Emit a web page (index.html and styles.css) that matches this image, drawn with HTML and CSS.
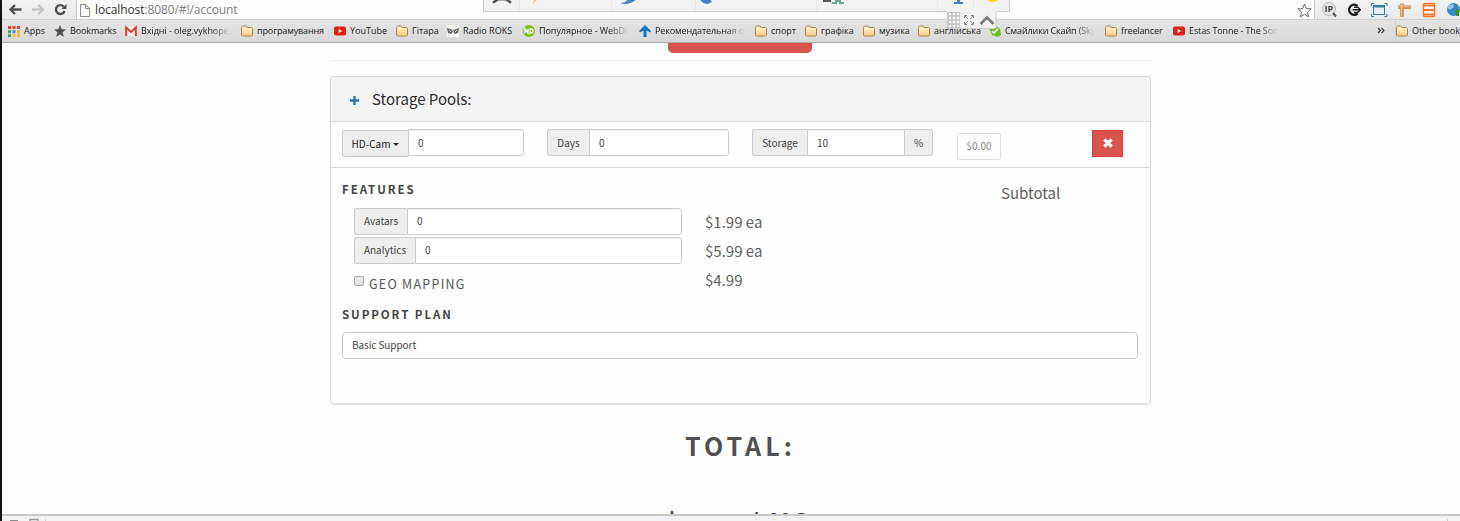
FILE: index.html
```html
<!DOCTYPE html>
<html lang="uk">
<head>
<meta charset="utf-8">
<title>Account</title>
<link rel="stylesheet" href="styles.css">
</head>
<body>
<svg width="0" height="0" class="defs">
  <defs>
    <linearGradient id="fold" x1="0" y1="0" x2="0" y2="1"><stop offset="0" stop-color="#fff0c4"/><stop offset="1" stop-color="#f7cf83"/></linearGradient>
    <symbol id="folder" viewBox="0 0 12 11"><path d="M.5 9.5V2L1.5.5h3.700l1 1.500h4.300l1 1v6.500l-1 1h-9z" fill="url(#fold)" stroke="#a98249"/><path d="M1.500 3.500h9" stroke="#fff7da"/></symbol>
    <symbol id="yt" viewBox="0 0 12 12"><rect y="1.500" width="12" height="9" rx="2" fill="#e1201b"/><path d="M4.700 4v4l3.500-2z" fill="#fff"/></symbol>
  </defs>
</svg>
<div class="window">
  <header class="chrome">
    <div class="nav">
      <svg class="navbtns" viewBox="0 0 74 19" fill="none">
        <path d="M8.500 9.500h11M13 5 8.500 9.500 13 14" stroke="#505050" stroke-width="2.400"/>
        <path d="M30 9.500h11M36.500 5 41 9.500 36.500 14" stroke="#c5c5c5" stroke-width="2.400"/>
        <path d="M61.700 6.700A4.400 4.400 0 1 0 62.500 11" stroke="#505050" stroke-width="2.400"/><path d="M64.500 4v5h-5z" fill="#505050"/>
      </svg>
      <div class="address">
        <svg width="10" height="13" viewBox="0 0 10 13"><path d="M.5.5h5l4 4v8h-9zM5.500.5v4h4" fill="#fff" stroke="#8c8c8c"/></svg>
        <span class="url"><b>localhost</b>:8080/#!/account</span>
        <svg class="star" width="15" height="15" viewBox="0 0 15 15"><path d="m7.500 1 1.900 4.600 4.900.3-3.800 3.200 1.200 4.800-4.200-2.600-4.200 2.600 1.200-4.800L.7 5.900l4.900-.3z" fill="#fff" stroke="#686868"/></svg>
      </div>
      <svg class="exts" viewBox="0 0 145 20" fill="none">
        <circle cx="14" cy="9" r="6.500" fill="#e5e5e5" stroke="#b5b9ba"/><path d="m18 13 3 3.500" stroke="#555" stroke-width="2"/><text x="9.500" y="12" class="iptext">IP</text>
        <path d="M42.500 6A5 5 0 1 0 42.500 13.500" stroke="#1c1c1c" stroke-width="2.400"/><path d="M37.500 9.800H46M39 7.200h3.500q4.500 2.600 0 5.200H39" stroke="#1c1c1c" stroke-width="1.500"/>
        <rect x="58.500" y="5.500" width="11" height="9" fill="#e9f1f7" stroke="#397ba5"/><path d="M58.500 6.500h11" stroke="#397ba5" stroke-width="2"/><path d="M56.500 6V3.500H59M69.500 3.500H72V6M56.500 14v2.500H59M69.500 16.500H72V14" stroke="#397ba5"/>
        <path d="M83 5h13v4H83zM85 3.500h4V17h-4z" fill="#d99a62"/><path d="M83 6h13M86.500 4v13" stroke="#f2c693"/>
        <rect x="108.500" y="3.500" width="11" height="13" rx="1.500" fill="#fff" stroke="#f47728" stroke-width="1.500"/><path d="M109 5.500h10M109 10h10M109 14.500h10" stroke="#f47728" stroke-width="2"/>
        <circle cx="138.500" cy="9.500" r="6.500" fill="#3189c5"/><path d="M134 5l4-1 1 3-4 3-3-2z" fill="#8cc5e8"/><path d="m139 12 3.500-3.500L146 12h-2v4h-3v-4z" fill="#389719"/>
      </svg>
    </div>
    <nav class="bookmarks">
      <a class="w46"><svg viewBox="0 0 12 12"><path d="M0 1h3v3H0zM4.500 1h3v3h-3zM9 1h3v3H9z" fill="#e8443a"/><path d="M0 5.200h3v3H0z" fill="#30a65a"/><path d="M4.500 5.200h3v3h-3z" fill="#3f87e5"/><path d="M9 5.200h3v3H9zM4.500 9.300h3V12h-3zM9 9.300h3V12H9z" fill="#f2b929"/><path d="M0 9.300h3V12H0z" fill="#30a65a"/></svg><span>Apps</span></a>
      <a class="w71"><svg viewBox="0 0 12 12"><path d="m6 0 1.700 4.200 4.300.2-3.400 2.900L9.800 12 6 9.400 2.200 12l1.200-4.700L0 4.400l4.300-.2z" fill="#505050"/></svg><span class="tight">Bookmarks</span></a>
      <a class="w116"><svg viewBox="0 0 12 12"><path d="M1 2h10v9H1z" fill="#f5f5f5"/><path d="M1.200 11V2.500L6 7l4.800-4.500V11" fill="none" stroke="#d33e32" stroke-width="2"/></svg><span class="fade">Вхідні - oleg.vykhope</span></a>
      <a class="w93"><svg><use href="#folder"/></svg><span class="tight">програмування</span></a>
      <a class="w62"><svg><use href="#yt"/></svg><span>YouTube</span></a>
      <a class="w51"><svg><use href="#folder"/></svg><span>Гітара</span></a>
      <a class="w76"><svg viewBox="0 0 12 12"><path d="M0 0h12v12H0z" fill="#f8f8f8"/><path d="m0 3 3 1 3 1 3-1 3-1-1 5-3 1-2-2-2 2-3-1z" fill="#666"/><path d="M2 5l2 2M10 5 8 7M6 5v3" stroke="#ddd"/></svg><span>Radio ROKS</span></a>
      <a class="w116"><svg viewBox="0 0 12 12"><circle cx="6" cy="6" r="6" fill="#82bf20"/><path d="M2 8V4l3 4V4M7 4h1q2 0 2 2t-2 2H7z" fill="none" stroke="#fff" stroke-width="1.300"/></svg><span class="fade">Популярное - WebDi</span></a>
      <a class="w116"><svg viewBox="0 0 12 12"><path d="m6 0 6 6-1 1.500-3.500-2V12h-3V5.500L1 7.500 0 6z" fill="#1474c1"/></svg><span class="fade tight">Рекомендательная се</span></a>
      <a class="w50"><svg><use href="#folder"/></svg><span>спорт</span></a>
      <a class="w58"><svg><use href="#folder"/></svg><span>графіка</span></a>
      <a class="w55"><svg><use href="#folder"/></svg><span>музика</span></a>
      <a class="w71"><svg><use href="#folder"/></svg><span>англійська</span></a>
      <a class="w116"><svg viewBox="0 0 12 12"><path d="M0 3h4l3-2 4 3 1 6-3 2-6-2z" fill="#70bd20"/><path d="m3 6 2 2 4-4" stroke="#fff" stroke-width="1.500" fill="none"/></svg><span class="fade tight">Смайлики Скайп (Sky</span></a>
      <a class="w68"><svg><use href="#folder"/></svg><span class="tight">freelancer</span></a>
      <a class="w116"><svg><use href="#yt"/></svg><span class="fade tight">Estas Tonne - The Son</span></a>
      <div class="more"><svg width="8" height="7" viewBox="0 0 8 7"><path d="m1 1 2.500 2.500L1 6M4.500 1 7 3.500 4.500 6" stroke="#333" stroke-width="1.100" fill="none"/></svg></div>
      <a class="other"><svg><use href="#folder"/></svg><span>Other bookmarks</span></a>
    </nav>
  </header>

  <svg class="floatbar" width="527" height="30" viewBox="0 0 527 30" fill="none">
    <path d="M0 0h527v12H513v17H464V12H0z" fill="#f2f2f2"/><path d="M.5 0v11.500H464M513 11.500h13.500V0M464 28.500h49V12" stroke="#cdcdcd"/>
    <path d="M36.500 0v11M128.500 0v11M212.500 0v11M333.500 0v11M454.500 0v11M490.500 0v11" stroke="#e9e9e9"/>
    <path d="m9 2 4-3h12l4 3-2 1.500-4.500-3h-7l-4.500 3z" fill="#555"/><path d="m49 4 3-5h3z" fill="#f2bd68"/><path d="M137 3q6 2 10 0 5-1 6-4h-8q-2 4-8 4z" fill="#4d82bb"/><path d="M217-1q2 5 8 5l4-2-2-3z" fill="#4d82bb"/><path d="M340 0h8v2h-8z" fill="#555"/><path d="M349 3h4V0M357 0v3h4M352 1h5" stroke="#72a795" stroke-width="2"/><path d="M474 0h3v2h3v2h-9V2h3z" fill="#4d82bb"/><path d="M504 0h11q-5 4-11 0z" fill="#ffda00"/>
    <path d="M464 12h13v16h-13z" fill="#c9c9c9"/><path d="M466 13h2v2h-2zm4 0h2v2h-2zm4 0h2v2h-2zm-8 4h2v2h-2zm4 0h2v2h-2zm4 0h2v2h-2zm-8 4h2v2h-2zm4 0h2v2h-2zm4 0h2v2h-2zm-8 4h2v2h-2zm4 0h2v2h-2zm4 0h2v2h-2z" fill="#fff"/>
    <path d="M481.500 18v-2.500h2.500M488 15.500h2.500V18M481.500 22v2.500h2.500M488 24.500h2.500V22M482 16l3 3M490 16l-3 3M482 24l3-3M490 24l-3-3" stroke="#858585"/>
    <path d="m497.500 24 6.500-6.500 6.500 6.500" stroke="#7d7d7d" stroke-width="2.800"/>
  </svg>

  <main class="page">
    <div class="redbtn"></div>
    <hr class="rule">
    <section class="panel">
      <div class="panel-head">
        <svg width="9" height="9" viewBox="0 0 9 9"><path d="M3.300 0h2.400v3.300H9v2.400H5.700V9H3.300V5.700H0V3.300h3.300z" fill="#2678b8"/></svg>
        <h2>Storage Pools:</h2>
      </div>
      <div class="pool">
        <div class="group cam"><button class="addon">HD-Cam<i class="caret"></i></button><span class="input">0</span></div>
        <div class="group days"><span class="addon">Days</span><span class="input">0</span></div>
        <div class="group store"><span class="addon">Storage</span><span class="input">10</span><span class="addon pct">%</span></div>
        <div class="price">$0.00</div>
        <button class="remove"><svg width="10" height="10" viewBox="0 0 10 10"><path d="m1.300 1.300 7.400 7.400M8.700 1.300 1.300 8.700" stroke="#fff" stroke-width="3.200"/></svg></button>
      </div>
      <div class="details">
        <div class="left">
          <h3>FEATURES</h3>
          <div class="feature"><div class="group"><span class="addon a1">Avatars</span><span class="input">0</span></div><span class="cost">$1.99 ea</span></div>
          <div class="feature"><div class="group"><span class="addon a2">Analytics</span><span class="input">0</span></div><span class="cost">$5.99 ea</span></div>
          <div class="feature"><label class="geo"><i class="check"></i><span>GEO MAPPING</span></label><span class="cost">$4.99</span></div>
        </div>
        <div class="subtotal">Subtotal</div>
      </div>
      <h3 class="plan">SUPPORT PLAN</h3>
      <div class="select">Basic Support</div>
    </section>
    <h1 class="total">TOTAL:</h1>
    <p class="amount">$0.00 / MO</p>
  </main>

  <footer class="devbar">
    <svg width="60" height="6" viewBox="0 0 60 6" fill="none"><path d="M8 4h8v2H8z" fill="#8a8a8a"/><path d="M28 6V3.500h8V6" stroke="#9c9c9c" stroke-width="1.500"/><path d="M43.500 3v3" stroke="#ccc"/></svg>
    <i class="tick"></i>
  </footer>
</div>
</body>
</html>
```
FILE: styles.css
```css
* { box-sizing: border-box; }
body { margin: 0; background: #fdfdfd; font-family: "Noto Sans CJK SC", "Noto Sans", sans-serif; color: #444; }
.defs { position: absolute; }
.window { position: relative; width: 1460px; height: 521px; overflow: hidden; display: flex; flex-direction: column; border-left: 2px solid #131313; }
h1, h2, h3, p { margin: 0; }
button { font: inherit; color: inherit; padding: 0; }

.chrome { height: 43px; flex: none; background: #e9e9e9; border-bottom: 1px solid #aaa; font-family: "Open Sans", "Noto Sans", sans-serif; }
.nav { height: 19px; display: flex; background: linear-gradient(#f3f3f3, #e9e9e9); }
.navbtns { width: 74px; height: 19px; flex: none; }
.address { width: 1239px; display: flex; align-items: center; gap: 5px; padding: 1px 2px 0 3px; background: #fdfdfd; border-left: 1px solid #c9c9c9; border-right: 1px solid #c9c9c9; }
.url { font-size: 12px; line-height: 18px; color: #808080; white-space: nowrap; letter-spacing: -.1px; }
.url b { font-weight: 400; color: #333; }
.star { margin-left: auto; }
.exts { width: 145px; height: 20px; flex: none; }
.iptext { font: bold 9px "Open Sans", sans-serif; fill: #444; }
.bookmarks { height: 23px; display: flex; padding: 0 0 1px 6px; background: linear-gradient(#e4e4e4, #d9d9d9); border-top: 1px solid #cfcfcf; font-size: 9px; color: #222; }
.bookmarks a { display: flex; align-items: center; gap: 4px; flex: none; white-space: nowrap; }
.bookmarks a svg { width: 12px; height: 12px; flex: none; }
.bookmarks .fade { width: 90px; letter-spacing: -.05px; mask-image: linear-gradient(90deg, #000 78%, transparent); }
.bookmarks .tight { letter-spacing: -.12px; }
.w46 { width: 46px; } .w50 { width: 50px; } .w51 { width: 51px; } .w55 { width: 55px; } .w58 { width: 58px; }
.w62 { width: 62px; } .w68 { width: 68px; } .w71 { width: 71px; } .w76 { width: 76px; } .w93 { width: 93px; } .w116 { width: 116px; }
.more { width: 24px; margin-left: auto; display: flex; align-items: center; padding-left: 5px; border-right: 1px solid #c9d0d6; }
.bookmarks .other { width: 64px; }
.floatbar { position: absolute; left: 481px; top: 0; }

.page { flex: 1; min-height: 0; width: 821px; margin-left: 328px; overflow: hidden; }
.redbtn { width: 144px; height: 10px; margin-left: 338px; background: #d9534f; border-radius: 0 0 5px 5px; }
.rule { height: 1px; margin: 7px 0 15px; border: 0; background: #ececec; }
.panel { height: 329px; border: 1px solid #d9d9d9; border-bottom: 2px solid #e3e3e3; border-radius: 4px; background: #fefefe; }
.panel-head { height: 45px; display: flex; align-items: center; gap: 13px; padding: 0 19px; background: #f4f4f4; border-bottom: 1px solid #d9d9d9; border-radius: 3px 3px 0 0; }
.panel-head svg { margin-top: 2px; }
.panel-head h2 { font-size: 15px; font-weight: 400; color: #2c2c2c; line-height: 20px; margin-top: -1px; }
.pool { height: 46px; display: grid; grid-template-columns: 205px 205px 205px 135px 32px; padding: 7px 0 0 11px; border-bottom: 1px solid #d9d9d9; align-items: start; }
.group { display: flex; height: 27px; font-size: 10px; line-height: 25px; }
.cam { width: 182px; } .days { width: 182px; } .store { width: 181px; }
.addon { flex: none; height: 27px; border: 1px solid #ccc; border-right: 0; border-radius: 3px 0 0 3px; background: #eee; text-align: center; }
.cam .addon { width: 66px; margin-top: 1px; color: #222; }
.days .addon { width: 42px; } .store .addon { width: 55px; }
.store .pct { width: 28px; border: 1px solid #ccc; border-left: 0; border-radius: 0 3px 3px 0; }
.input { flex: 1; border: 1px solid #ccc; border-radius: 0 3px 3px 0; background: #fff; padding-left: 9px; box-shadow: inset 0 1px 1px #eee; }
.store .input { border-radius: 0; }
.caret { display: inline-block; border: 3px solid transparent; border-top-color: #222; border-bottom: 0; margin: 0 0 2px 3px; }
.price { width: 44px; height: 27px; margin-top: 4px; border: 1px solid #ddd; border-radius: 3px; font-size: 10px; line-height: 24px; text-align: center; color: #888; }
.remove { width: 31px; height: 27px; margin-top: 1px; border: 1px solid #d43f3a; background: #d9534f; display: flex; align-items: center; justify-content: center; }
.remove svg { margin-top: -1px; }
.details { display: flex; height: 137px; padding-left: 11px; }
.left { width: 659px; padding-top: 12px; }
h3 { font-size: 11.500px; font-weight: 700; line-height: 18px; letter-spacing: 1.930px; color: #444; }
.left h3 { margin-bottom: 10px; }
.feature { display: flex; height: 29px; padding-left: 12px; }
.feature .group { width: 328px; line-height: 23px; }
.a1 { width: 53px; } .a2 { width: 61px; }
.cost { margin-left: 23px; font-size: 15px; line-height: 27px; color: #606060; }
.geo { width: 328px; display: flex; gap: 5px; font-size: 12.500px; line-height: 18px; letter-spacing: 1.250px; padding-top: 9px; color: #555; }
.check { width: 10px; height: 10px; margin-top: 1px; border: 1px solid #aaa; border-radius: 2px; background: linear-gradient(#eee, #ddd); }
.subtotal { padding-top: 14px; font-size: 15px; line-height: 22px; color: #606060; }
.plan { margin-left: 11px; }
.select { width: 796px; height: 27px; margin: 9px 0 0 11px; padding-left: 9px; border: 1px solid #ccc; border-radius: 4px; background: #fff; font-size: 10px; letter-spacing: -.08px; line-height: 24px; color: #444; }
.total { margin: 21px 0 0; text-align: center; font-size: 25px; line-height: 38px; letter-spacing: 4.100px; color: #505050; }
.amount { margin: 38px 3px 0 0; text-align: center; font-size: 23.500px; font-weight: 700; line-height: 38px; letter-spacing: 2.700px; color: #444; }
.devbar { flex: none; height: 7px; display: flex; justify-content: space-between; border-top: 2px solid #c9c9c9; background: #f2f2f2; }
.tick { width: 1px; height: 2px; margin: 3px 12px 0 0; background: #ccc; }
```
